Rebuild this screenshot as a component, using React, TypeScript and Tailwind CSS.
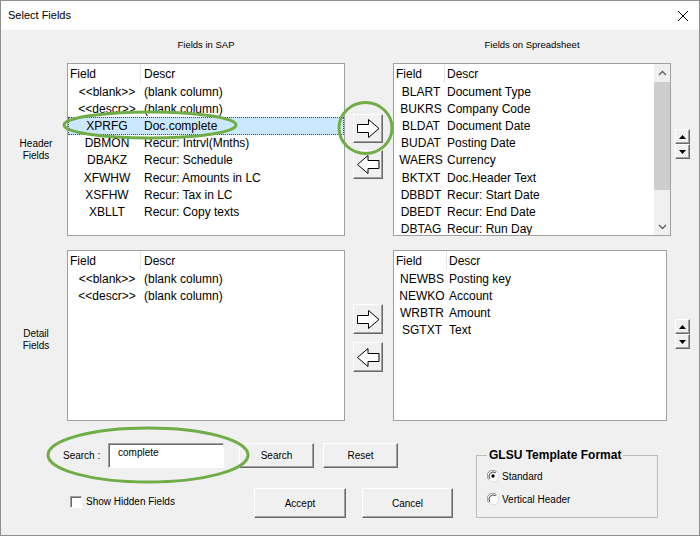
import React from "react";

type Row = [string, string];

const raised =
  "bg-[#f0f0f0] border border-t-white border-l-white border-r-[#696969] border-b-[#696969] shadow-[inset_-1px_-1px_0_#a0a0a0]";
const sunken =
  "bg-white border border-t-[#a0a0a0] border-l-[#a0a0a0] border-r-white border-b-white shadow-[inset_1px_1px_0_#696969]";

const headerRows: Row[] = [
  ["<<blank>>", "(blank column)"],
  ["<<descr>>", "(blank column)"],
  ["XPRFG", "Doc.complete"],
  ["DBMON", "Recur: Intrvl(Mnths)"],
  ["DBAKZ", "Recur: Schedule"],
  ["XFWHW", "Recur: Amounts in LC"],
  ["XSFHW", "Recur: Tax in LC"],
  ["XBLLT", "Recur: Copy texts"],
];

const sheetHeaderRows: Row[] = [
  ["BLART", "Document Type"],
  ["BUKRS", "Company Code"],
  ["BLDAT", "Document Date"],
  ["BUDAT", "Posting Date"],
  ["WAERS", "Currency"],
  ["BKTXT", "Doc.Header Text"],
  ["DBBDT", "Recur: Start Date"],
  ["DBEDT", "Recur: End Date"],
  ["DBTAG", "Recur: Run Day"],
];

const detailRows: Row[] = [
  ["<<blank>>", "(blank column)"],
  ["<<descr>>", "(blank column)"],
];

const sheetDetailRows: Row[] = [
  ["NEWBS", "Posting key"],
  ["NEWKO", "Account"],
  ["WRBTR", "Amount"],
  ["SGTXT", "Text"],
];

const Arrow = ({ dir }: { dir: "right" | "left" }) => (
  <svg width="23" height="19" viewBox="0 0 23 19">
    <polygon
      points={
        dir === "right"
          ? "0.5,5.5 11.5,5.5 11.5,0.5 22,9.5 11.5,18.5 11.5,13.5 0.5,13.5"
          : "22,5.5 11,5.5 11,0.5 0.5,9.5 11,18.5 11,13.5 22,13.5"
      }
      fill="white"
      stroke="black"
      strokeWidth="1"
    />
  </svg>
);

const Scrollbar = () => (
  <div className="w-[16px] flex flex-col bg-[#f0f0f0]">
    <div className="h-[17px] flex items-center justify-center">
      <svg width="9" height="6" viewBox="0 0 9 6">
        <polyline points="1,5 4.5,1.5 8,5" fill="none" stroke="#606060" strokeWidth="1.3" />
      </svg>
    </div>
    <div className="flex-1">
      <div className="mt-[1px] h-[108px] bg-[#cdcdcd]" />
    </div>
    <div className="h-[17px] flex items-center justify-center">
      <svg width="9" height="6" viewBox="0 0 9 6">
        <polyline points="1,1 4.5,4.5 8,1" fill="none" stroke="#606060" strokeWidth="1.3" />
      </svg>
    </div>
  </div>
);

const Spin = () => (
  <div className="flex flex-col w-[15px]">
    <div className={`${raised} h-[15px] flex items-center justify-center`}>
      <svg width="7" height="4" viewBox="0 0 7 4">
        <polygon points="0,4 3.5,0 7,4" fill="black" />
      </svg>
    </div>
    <div className={`${raised} h-[15px] flex items-center justify-center`}>
      <svg width="7" height="4" viewBox="0 0 7 4">
        <polygon points="0,0 7,0 3.5,4" fill="black" />
      </svg>
    </div>
  </div>
);

const Radio = ({ on }: { on?: boolean }) => (
  <svg width="12" height="12" viewBox="0 0 12 12">
    <circle cx="6" cy="6" r="5.5" fill="white" />
    <path d="M10.2 2.4 A5.4 5.4 0 0 1 2.4 10.2" stroke="#dcdcdc" fill="none" />
    <path d="M1.8 9.6 A5.4 5.4 0 0 1 9.6 1.8" stroke="#8a8a8a" fill="none" />
    <path d="M2.8 8.8 A4.3 4.3 0 0 1 8.8 2.8" stroke="#404040" fill="none" />
    {on && <circle cx="6" cy="6" r="1.7" fill="black" />}
  </svg>
);

interface ListBoxProps {
  rows: Row[];
  fieldW: string;
  fieldPad: string;
  descrPad: string;
  sel?: number;
  scroll?: boolean;
  className?: string;
}

const ListBox: React.FC<ListBoxProps> = ({ rows, fieldW, fieldPad, descrPad, sel, scroll, className }) => (
  <div className={`flex overflow-hidden bg-white border border-[#a0a0a0] text-[12px] leading-[14px] ${className}`}>
    <div className="flex-1 min-w-0">
      {/* 헤더 */}
      <div className="flex h-[19px]">
        <div className={`${fieldW} shrink-0 flex items-center pl-[2px] border-r border-[#e5e5e5]`}>Field</div>
        <div className={`flex items-center ${descrPad}`}>Descr</div>
      </div>
      {rows.map(([f, d], i) => (
        <div
          key={i}
          className={`flex h-[17.2px] items-center whitespace-nowrap ${
            i === sel ? "bg-[#cce8ff] outline-1 outline-dotted outline-[#444] -outline-offset-1" : ""
          }`}
        >
          <div className={`${fieldW} ${fieldPad} shrink-0 text-center`}>{f}</div>
          <div className={descrPad}>{d}</div>
        </div>
      ))}
    </div>
    {scroll && <Scrollbar />}
  </div>
);

const Btn = ({ className, children }: { className?: string; children: React.ReactNode }) => (
  <div className={`${raised} flex items-center justify-center text-[10px] ${className}`}>{children}</div>
);

export default function App() {
  return (
    <div className="relative w-[700px] h-[536px] border border-[#8f8f8f] bg-[#f0f0f0] text-black font-['Liberation_Sans',Arial,sans-serif] overflow-hidden">
      {/* 타이틀 바 */}
      <div className="h-[29px] bg-white flex items-center justify-between pl-[7px] pr-[10px]">
        <span className="text-[11px]">Select Fields</span>
        <svg width="12" height="12" viewBox="0 0 12 12">
          <path d="M1 1 L11 11 M11 1 L1 11" stroke="black" strokeWidth="1" />
        </svg>
      </div>

      {/* 열 제목 */}
      <div className="flex h-[33px] pt-[9px] text-[9.5px] leading-[11px]">
        <div className="w-[66px]" />
        <div className="w-[278px] text-center">Fields in SAP</div>
        <div className="w-[48px]" />
        <div className="w-[278px] text-center">Fields on Spreadsheet</div>
      </div>

      {/* Header fields */}
      <div className="flex h-[173px]">
        <div className="w-[66px] flex items-center justify-center pl-[4px] text-[10px] leading-[12px] text-center">
          Header
          <br />
          Fields
        </div>
        <ListBox rows={headerRows} fieldW="w-[73px]" fieldPad="pl-[5px]" descrPad="pl-[3px]" sel={2} className="w-[278px]" />
        <div className="w-[48px] flex flex-col pl-[8px] pt-[51px] gap-[7px]">
          <Btn className="w-[30px] h-[29px]">
            <Arrow dir="right" />
          </Btn>
          <Btn className="w-[30px] h-[29px]">
            <Arrow dir="left" />
          </Btn>
        </div>
        <ListBox rows={sheetHeaderRows} fieldW="w-[51px]" fieldPad="pl-[3px]" descrPad="pl-[2px]" scroll className="w-[278px]" />
        <div className="pl-[4px] pt-[66px]">
          <Spin />
        </div>
      </div>

      {/* Detail fields */}
      <div className="flex h-[171px] mt-[14px]">
        <div className="w-[66px] flex items-center justify-center pl-[4px] pt-[9px] text-[10px] leading-[12px] text-center">
          Detail
          <br />
          Fields
        </div>
        <ListBox rows={detailRows} fieldW="w-[73px]" fieldPad="pl-[5px]" descrPad="pl-[3px]" className="w-[278px]" />
        <div className="w-[48px] flex flex-col pl-[8px] pt-[54px] gap-[8px]">
          <Btn className="w-[30px] h-[30px]">
            <Arrow dir="right" />
          </Btn>
          <Btn className="w-[30px] h-[30px]">
            <Arrow dir="left" />
          </Btn>
        </div>
        <ListBox rows={sheetDetailRows} fieldW="w-[53px]" fieldPad="pl-[3px]" descrPad="pl-[2px]" className="w-[274px]" />
        <div className="pl-[8px] pt-[69px]">
          <Spin />
        </div>
      </div>

      {/* 하단 영역 */}
      <div className="flex">
        <div className="w-[475px] flex flex-col">
          <div className="mt-[22px] h-[25px] flex items-center pl-[62px] text-[10px]">
            <span className="w-[45px]">Search :</span>
            <div className={`${sunken} w-[116px] h-[25px] pl-[9px] pt-[3px] leading-[12px]`}>complete</div>
            <Btn className="ml-[15px] w-[75px] h-[25px]">Search</Btn>
            <Btn className="ml-[9px] w-[75px] h-[25px]">Reset</Btn>
          </div>
          <div className="mt-[20px] h-[30px] flex items-center pl-[69px] text-[10px]">
            <div className="w-[184px] flex items-center -mt-[3px]">
              <div className={`${sunken} w-[12px] h-[12px]`} />
              <span className="ml-[4px]">Show Hidden Fields</span>
            </div>
            <Btn className="w-[92px] h-[30px]">Accept</Btn>
            <Btn className="ml-[16px] w-[91px] h-[30px]">Cancel</Btn>
          </div>
        </div>
        <fieldset className="mt-[27px] w-[182px] h-[70px] border border-[#bcbcbc] px-[10px]">
          <legend className="px-[2px] text-[12px] font-bold leading-[14px]">GLSU Template Format</legend>
          <div className="mt-[6px] h-[16px] flex items-center text-[10px]">
            <Radio on />
            <span className="ml-[3px]">Standard</span>
          </div>
          <div className="mt-[7px] h-[16px] flex items-center text-[10px]">
            <Radio />
            <span className="ml-[3px]">Vertical Header</span>
          </div>
        </fieldset>
      </div>

      {/* 주석 표시 (녹색 타원) */}
      <svg className="absolute left-[-1px] top-[-1px] pointer-events-none" width="700" height="536" viewBox="0 0 700 536">
        <ellipse cx="150" cy="125" rx="86" ry="13" fill="none" stroke="#70ad47" strokeWidth="3" />
        <ellipse cx="365.5" cy="128" rx="26.5" ry="25.5" fill="none" stroke="#70ad47" strokeWidth="3" />
        <ellipse cx="148" cy="455" rx="100" ry="27" fill="none" stroke="#70ad47" strokeWidth="3" />
      </svg>
    </div>
  );
}
